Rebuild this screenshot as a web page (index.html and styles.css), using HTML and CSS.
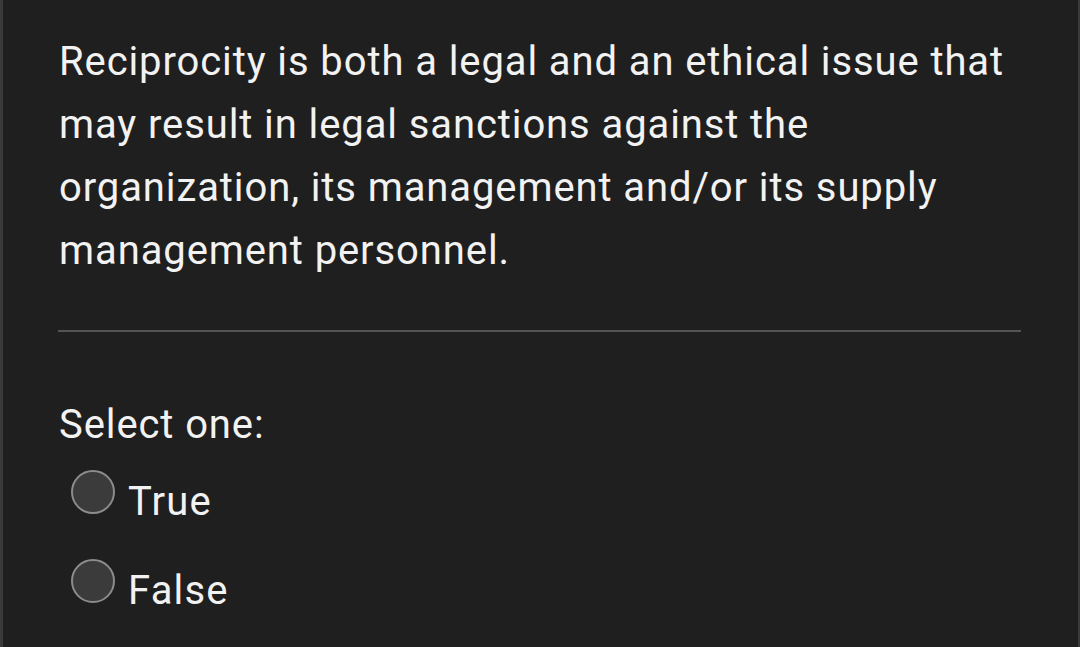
FILE: index.html
```html
<!DOCTYPE html>
<html lang="en">
<head>
<meta charset="utf-8">
<title>Question</title>
<link rel="stylesheet" href="styles.css">
</head>
<body>
<div class="card">
  <p class="question">Reciprocity is both a legal and an ethical issue that may result in legal sanctions against the organization, its management and/or its supply management personnel.</p>
  <hr class="divider">
  <div class="prompt">Select one:</div>
  <div class="options">
    <label class="option"><span class="radio"></span><span class="label">True</span></label>
    <label class="option"><span class="radio"></span><span class="label">False</span></label>
  </div>
</div>
</body>
</html>
```
FILE: styles.css
```css
html, body {
  margin: 0;
  padding: 0;
  background: #1f1f1f;
}
body {
  width: 1080px;
  height: 647px;
  overflow: hidden;
  font-family: Roboto, "Liberation Sans", sans-serif;
  color: #f2f2f2;
}
.card {
  box-sizing: border-box;
  height: 647px;
  padding: 30px 58px 0 56px;
  border-left: 3px solid #3a3a3a;
  border-right: 2px solid #3a3a3a;
}
.question {
  margin: 0;
  font-size: 40px;
  line-height: 63px;
  letter-spacing: 0.9px;
}
.divider {
  margin: 48px -1px 0 -1px;
  border: 0;
  height: 2px;
  background: #545454;
}
.prompt {
  margin-top: 61px;
  font-size: 40px;
  line-height: 63px;
  letter-spacing: 0.9px;
}
.options {
  margin-top: 14px;
  display: flex;
  flex-direction: column;
  gap: 26px;
}
.option {
  display: flex;
  align-items: flex-start;
  gap: 13px;
  padding-left: 12px;
}
.radio {
  box-sizing: border-box;
  width: 44px;
  height: 44px;
  border-radius: 50%;
  border: 2.5px solid #8c8c8c;
  background: #3b3b3b;
  flex: none;
}
.label {
  font-size: 40px;
  line-height: 63px;
  letter-spacing: 1.2px;
}
```
